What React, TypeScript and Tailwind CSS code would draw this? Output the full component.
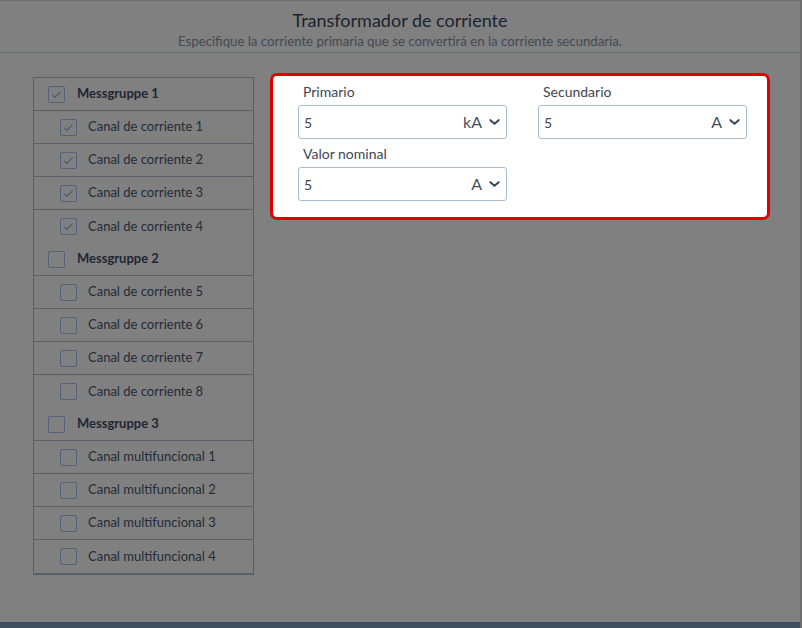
const groups = [
  { name: "Messgruppe 1", checked: true, items: ["Canal de corriente 1", "Canal de corriente 2", "Canal de corriente 3", "Canal de corriente 4"] },
  { name: "Messgruppe 2", checked: false, items: ["Canal de corriente 5", "Canal de corriente 6", "Canal de corriente 7", "Canal de corriente 8"] },
  { name: "Messgruppe 3", checked: false, items: ["Canal multifuncional 1", "Canal multifuncional 2", "Canal multifuncional 3", "Canal multifuncional 4"] },
];

function Check({ checked }: { checked: boolean }) {
  return (
    <span className="w-[17px] h-[17px] border border-[#53627a] rounded-[2px] flex items-center justify-center shrink-0">
      {checked && (
        <svg viewBox="0 0 16 16" className="w-[13px] h-[13px]" fill="none" stroke="#4a586d" strokeWidth={1.4}>
          <path d="M3 8.5l3 3 7-7" />
        </svg>
      )}
    </span>
  );
}

function Field({ label, value, unit, className = "" }: { label: string; value: string; unit: string; className?: string }) {
  return (
    <div className={`w-[209px] ${className}`}>
      <div className="pl-[5px] h-[26px] text-[14px] text-[#3d4654] leading-none pt-[6px]">{label}</div>
      <div className="h-[34px] border border-[#a9bbcf] rounded-[3px] flex items-center pl-[5px] pr-[6px] text-[14px] text-[#3d4654]">
        <span className="flex-1">{value}</span>
        <span className="text-[16px] mr-[7px] text-[#4a5260]">{unit}</span>
        <svg viewBox="0 0 12 8" className="w-[11px] h-[8px]" fill="none" stroke="#3d4654" strokeWidth={2.2} strokeLinecap="round" strokeLinejoin="round">
          <path d="M1.5 2l4.5 4 4.5-4" />
        </svg>
      </div>
    </div>
  );
}

export default function App() {
  return (
    <div className="w-[802px] h-[628px] bg-[#808080] flex flex-col border-r-2 border-[#6d6d6d]" style={{ fontFamily: "Lato, 'Noto Sans', sans-serif" }}>
      <div className="h-[53px] border-b border-t border-[#6c7178] flex flex-col items-center">
        <div className="text-[18px] text-[#1b2330] leading-none mt-[10px]">Transformador de corriente</div>
        <div className="text-[13.2px] text-[#424a55] leading-none mt-[6px]">Especifique la corriente primaria que se convertirá en la corriente secundaria.</div>
      </div>
      <div className="flex-1 flex items-start pl-[33px] pt-[24px]">
        <div className="w-[221px] border border-[#56616e] border-b-2">
          {groups.map((g) => (
            <div key={g.name}>
              <div className="h-[33px] border-b border-[#56616e] flex items-center pl-[14px] gap-[12px]">
                <Check checked={g.checked} />
                <span className="text-[13px] font-bold text-[#1e2633]">{g.name}</span>
              </div>
              {g.items.map((it) => (
                <div key={it} className="h-[33px] border-b border-[#56616e] last:border-b-0 flex items-center pl-[26px] gap-[11px]">
                  <Check checked={g.checked} />
                  <span className="text-[13px] text-[#232b37]">{it}</span>
                </div>
              ))}
            </div>
          ))}
        </div>
        <div className="ml-[16px] mt-[-4px] w-[500px] h-[147px] bg-white border-[3px] border-[#e00000] rounded-[7px] pl-[25px] pt-[3px]">
          <div className="flex gap-[31px]">
            <Field label="Primario" value="5" unit="kA" />
            <Field label="Secundario" value="5" unit="A" />
          </div>
          <Field label="Valor nominal" value="5" unit="A" className="mt-[2px]" />
        </div>
      </div>
      <div className="h-[6px] bg-[#3f4d60]" />
    </div>
  );
}
